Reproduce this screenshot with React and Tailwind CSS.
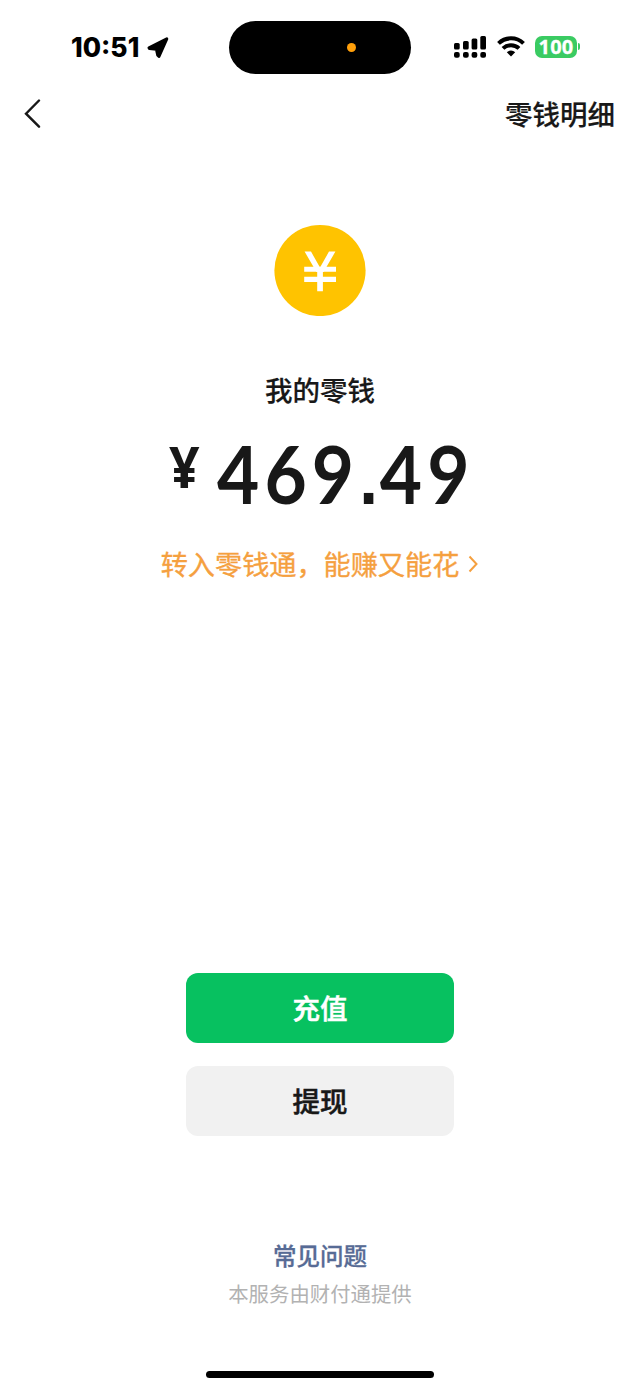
import React from 'react';

function StatusBar() {
  return (
    <header className="relative flex h-[93px] items-center">
      <div className="ml-[71px] flex w-[158px] items-center gap-[5px]">
        <span className="w-[70px] font-['Inter'] text-[26.5px] leading-[30px] font-extrabold whitespace-nowrap text-black">10:51</span>
        <svg width="24" height="24" viewBox="0 0 24 24" fill="#000" stroke="#000" strokeWidth="3" strokeLinejoin="round">
          <path d="M3 12.8 20.8 3.9 13 21.4 11.7 20.2 10.4 14.2 3.4 13.6Z" />
        </svg>
      </div>
      <div className="mt-px flex h-[53px] w-[182px] items-center rounded-full bg-black">
        <span className="ml-[118px] h-[9px] w-[9px] rounded-full bg-[#ff9f0a]" />
      </div>
      <div className="ml-[43px] flex items-center">
        <svg width="32" height="22" viewBox="0 0 32 22" fill="#000">
          <rect x="0" y="7" width="5.7" height="6.5" rx="1.5" />
          <rect x="9" y="5" width="5.7" height="8.5" rx="1.5" />
          <rect x="17.6" y="2.5" width="5.7" height="11" rx="1.5" />
          <rect x="26.3" y="0" width="5.7" height="13.5" rx="1.5" />
          <rect x="0" y="16" width="5.7" height="5.7" rx="2" />
          <rect x="9" y="16" width="5.7" height="5.7" rx="2" />
          <rect x="17.6" y="16" width="5.7" height="5.7" rx="2" />
          <rect x="26.3" y="16" width="5.7" height="5.7" rx="2" />
        </svg>
        <svg className="ml-[11px]" width="28" height="21" viewBox="0 0 28 21" fill="none" stroke="#000" strokeWidth="4">
          <path d="M1.5 7.4a18 18 0 0 1 25 0" />
          <path d="M6 12.4a11.6 11.6 0 0 1 16 0" />
          <path d="M9.8 16.2a6.2 6.2 0 0 1 8.4 0L14 20.5Z" fill="#000" stroke="none" />
        </svg>
        <div className="ml-[10px] flex h-[22px] w-[42px] items-center justify-center rounded-[7px] bg-[#3acb62]">
          <span className="font-['Open_Sans'] text-[20px] leading-[22px] font-bold tracking-[0.3px] text-white [-webkit-text-stroke:0.3px]">100</span>
        </div>
        <span className="ml-[1px] h-[7px] w-[2px] rounded-r-full bg-[#3acb62]" />
      </div>
    </header>
  );
}

function NavBar() {
  return (
    <nav className="flex h-[40px] items-center justify-between pr-[25px] pl-[24px]">
      <svg width="18" height="30" viewBox="0 0 18 30" fill="none" stroke="#181818" strokeWidth="2.4" strokeLinecap="round">
        <path d="M15 2.5 2 15.7 15 28.7" />
      </svg>
      <span className="text-[27.5px] leading-[40px] font-medium [-webkit-text-stroke:0.2px]">零钱明细</span>
    </nav>
  );
}

function CoinIcon() {
  return (
    <svg className="mt-[91px]" width="92" height="92" viewBox="0 0 92 92">
      <circle cx="46" cy="46.5" r="45.6" fill="#ffc300" />
      <g fill="#fff">
        <path d="M30.6 27.6H37L46 43.4 55 27.6H61.4L49.5 48H42.5Z" />
        <path d="M30.2 42.8H62V47.8H30.2ZM30.2 52.8H62V58H30.2ZM43.2 46H48.9V67.2H43.2Z" />
      </g>
    </svg>
  );
}

function Balance() {
  return (
    <section className="flex flex-col items-center">
      <CoinIcon />
      <h1 className="mt-[53px] text-[27.5px] leading-[40px] font-medium [-webkit-text-stroke:0.2px]">我的零钱</h1>
      <div className="mt-[24px] flex h-[80px] w-[302px] items-start">
        <span className="mt-px w-[47.5px] shrink-0 font-['Noto_Sans'] text-[57px] leading-[64px] font-bold">
          <span className="inline-block origin-left scale-x-[0.94]">¥</span>
        </span>
        <span className="shrink-0 origin-left scale-x-90 font-['Lato'] text-[81px] leading-[80px] font-bold tracking-[5.7px] whitespace-nowrap">
          469<span className="font-['Liberation_Sans'] text-[75px] tracking-[2px]">.</span>49
        </span>
      </div>
      <a className="mt-[31px] flex items-center gap-[9px] text-[27.15px] leading-[40px] text-[#f5a03f] [-webkit-text-stroke:0.35px]">
        <span>转入零钱通，能赚又能花</span>
        <svg width="11" height="18" viewBox="0 0 11 18" fill="none" stroke="#f5a03f" strokeWidth="2">
          <path d="M1.5 1.5 8.5 9 1.5 16.5" />
        </svg>
      </a>
    </section>
  );
}

export default function App() {
  return (
    <main className="flex h-[1391px] w-[640px] flex-col overflow-hidden bg-white font-['Noto_Sans_CJK_SC',sans-serif] text-[#181818]">
      <StatusBar />
      <NavBar />
      <Balance />
      <div className="mt-[389px] flex flex-col items-center gap-[23px]">
        <button className="h-[70px] w-[268px] rounded-[12px] bg-[#07c160] text-[27.5px] font-medium text-white [-webkit-text-stroke:0.5px]">充值</button>
        <button className="h-[70px] w-[268px] rounded-[12px] bg-[#f1f1f1] text-[27.5px] font-medium [-webkit-text-stroke:0.5px]">提现</button>
      </div>
      <footer className="mt-[100px] flex flex-col items-center">
        <a className="text-[23.5px] leading-[38px] font-medium text-[#576b95] [-webkit-text-stroke:0.3px]">常见问题</a>
        <p className="text-[20.4px] leading-[38px] text-[#b2b2b2]">本服务由财付通提供</p>
        <span className="mt-[59px] h-[7px] w-[228px] rounded-full bg-black" />
      </footer>
    </main>
  );
}
